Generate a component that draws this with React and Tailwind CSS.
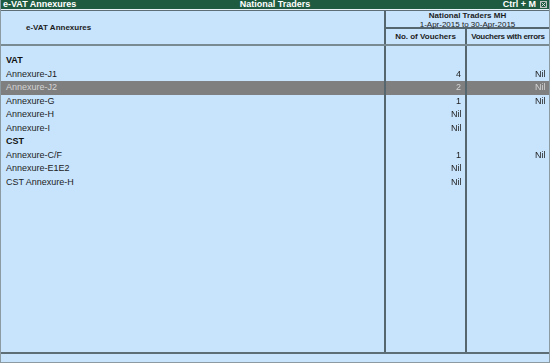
import React from 'react';

const rows = [
  { label: 'VAT', bold: true },
  { label: 'Annexure-J1', count: '4', errors: 'Nil' },
  { label: 'Annexure-J2', count: '2', errors: 'Nil', selected: true },
  { label: 'Annexure-G', count: '1', errors: 'Nil' },
  { label: 'Annexure-H', count: 'Nil' },
  { label: 'Annexure-I', count: 'Nil' },
  { label: 'CST', bold: true },
  { label: 'Annexure-C/F', count: '1', errors: 'Nil' },
  { label: 'Annexure-E1E2', count: 'Nil' },
  { label: 'CST Annexure-H', count: 'Nil' },
];

// alternate 14/13 so the rows keep a 13.5px pitch on whole pixels
const rowCls = (r, i) =>
  `${i % 2 ? 'h-[13px]' : 'h-[14px]'} flex items-center ${r.selected ? 'bg-[#7f7f7f] text-[#d4d4d4]' : ''}`;

export default function App() {
  return (
    <div
      className="w-[550px] h-[363px] flex flex-col bg-[#c8e4fc] text-[#1c1c1c] overflow-hidden border-l border-r border-b border-[#8c9aa2]"
      style={{ fontFamily: '"Liberation Sans", Arial, sans-serif' }}
    >
      {/* title bar */}
      <div className="h-[10px] bg-[#1f5b40] text-white font-bold text-[9px] flex items-center px-[2px] border-b border-[#e8f2f8]">
        <span className="w-[200px]">e-VAT Annexures</span>
        <span className="flex-1 text-center">National Traders</span>
        <span className="w-[200px] flex justify-end items-center gap-[4px]">
          Ctrl + M
          <span className="w-[7px] h-[7px] border border-[#c0c0c0] bg-[#1f5b40] flex items-center justify-center">
            <svg width="5" height="5" viewBox="0 0 5 5">
              <path d="M0.5 0.5L4.5 4.5M4.5 0.5L0.5 4.5" stroke="#d8d8d8" strokeWidth="1" />
            </svg>
          </span>
        </span>
      </div>

      {/* header */}
      <div className="h-[36px] flex border-t border-[#5e6e76] border-b-2 border-b-[#7a8a92]">
        <div className="w-[385px] border-r-2 border-[#56666e] flex items-center pl-[25px] font-bold text-[8px]">
          e-VAT Annexures
        </div>
        <div className="flex-1 flex flex-col">
          <div className="h-[18px] border-b-2 border-[#56666e] flex flex-col items-center justify-center leading-[9px] pt-[1px]">
            <span className="font-bold text-[8px]">National Traders MH</span>
            <span className="text-[8px]">1-Apr-2015 to 30-Apr-2015</span>
          </div>
          <div className="flex-1 flex font-bold text-[8px] whitespace-nowrap">
            <div className="w-[81px] border-r-2 border-[#56666e] flex items-center justify-center">No. of Vouchers</div>
            <div className="flex-1 flex items-center justify-center tracking-[-0.3px]">Vouchers with errors</div>
          </div>
        </div>
      </div>

      {/* body */}
      <div className="flex-1 flex text-[9px]">
        <div className="w-[385px] border-r-2 border-[#56666e] flex flex-col pt-[8px]">
          {rows.map((r, i) => (
            <div key={r.label} className={`${rowCls(r, i)} pl-[5px] ${r.bold ? 'font-bold text-[#111]' : ''}`}>
              {r.label}
            </div>
          ))}
        </div>
        <div className="w-[81px] border-r-2 border-[#56666e] flex flex-col pt-[8px]">
          {rows.map((r, i) => (
            <div key={r.label} className={`${rowCls(r, i)} justify-end pr-[4px]`}>
              <span className="[will-change:transform]">{r.count}</span>
            </div>
          ))}
        </div>
        <div className="flex-1 flex flex-col pt-[8px]">
          {rows.map((r, i) => (
            <div key={r.label} className={`${rowCls(r, i)} justify-end pr-[4px]`}>
              <span className="[will-change:transform]">{r.errors}</span>
            </div>
          ))}
        </div>
      </div>

      {/* footer strip */}
      <div className="h-[10px] border-t-2 border-[#5e6e76]" />
    </div>
  );
}
